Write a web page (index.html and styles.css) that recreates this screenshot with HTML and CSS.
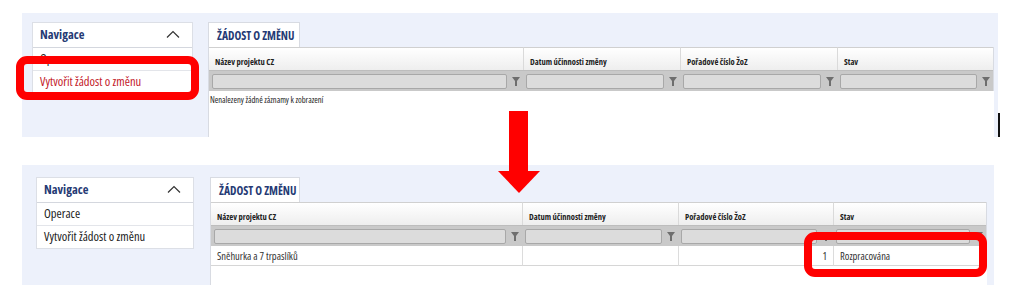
FILE: index.html
```html
<!DOCTYPE html>
<html lang="cs">
<head>
<meta charset="utf-8">
<title>Žádost o změnu</title>
<link rel="stylesheet" href="styles.css">
</head>
<body>
<div class="page">
  <section class="shot shot-top">
    <nav class="nav">
      <div class="nav-head"><span>Navigace</span><svg class="chev" width="14" height="8" viewBox="0 0 14 8"><path d="M1 7.5 L7 1.5 L13 7.5" fill="none" stroke="#333" stroke-width="1.2"/></svg></div>
      <div class="nav-item">Operace</div>
      <div class="nav-item active">Vytvořit žádost o změnu</div>
    </nav>
    <div class="main">
      <div class="tabs"><div class="tab">ŽÁDOST O ZMĚNU</div></div>
      <div class="grid cols-top">
        <div class="th">Název projektu CZ</div>
        <div class="th">Datum účinnosti změny</div>
        <div class="th">Pořadové číslo ŽoZ</div>
        <div class="th">Stav</div>
        <div class="tf"><span class="inp"></span><svg class="fun" width="8" height="9" viewBox="0 0 8 9"><path d="M0 0 H8 L5 4 V9 H3 V4 Z" fill="#6e6e6e"/></svg></div>
        <div class="tf"><span class="inp"></span><svg class="fun" width="8" height="9" viewBox="0 0 8 9"><path d="M0 0 H8 L5 4 V9 H3 V4 Z" fill="#6e6e6e"/></svg></div>
        <div class="tf"><span class="inp"></span><svg class="fun" width="8" height="9" viewBox="0 0 8 9"><path d="M0 0 H8 L5 4 V9 H3 V4 Z" fill="#6e6e6e"/></svg></div>
        <div class="tf"><span class="inp"></span><svg class="fun" width="8" height="9" viewBox="0 0 8 9"><path d="M0 0 H8 L5 4 V9 H3 V4 Z" fill="#6e6e6e"/></svg></div>
      </div>
      <div class="empty">Nenalezeny žádné záznamy k zobrazení</div>
    </div>
    <div class="mark mark-nav"></div>
    <div class="cursor"></div>
  </section>

  <section class="shot shot-bottom">
    <nav class="nav">
      <div class="nav-head"><span>Navigace</span><svg class="chev" width="14" height="8" viewBox="0 0 14 8"><path d="M1 7.5 L7 1.5 L13 7.5" fill="none" stroke="#333" stroke-width="1.2"/></svg></div>
      <div class="nav-item">Operace</div>
      <div class="nav-item">Vytvořit žádost o změnu</div>
    </nav>
    <div class="main">
      <div class="tabs"><div class="tab">ŽÁDOST O ZMĚNU</div></div>
      <div class="grid cols-bottom">
        <div class="th">Název projektu CZ</div>
        <div class="th">Datum účinnosti změny</div>
        <div class="th">Pořadové číslo ŽoZ</div>
        <div class="th">Stav</div>
        <div class="tf"><span class="inp"></span><svg class="fun" width="8" height="9" viewBox="0 0 8 9"><path d="M0 0 H8 L5 4 V9 H3 V4 Z" fill="#6e6e6e"/></svg></div>
        <div class="tf"><span class="inp"></span><svg class="fun" width="8" height="9" viewBox="0 0 8 9"><path d="M0 0 H8 L5 4 V9 H3 V4 Z" fill="#6e6e6e"/></svg></div>
        <div class="tf"><span class="inp"></span><svg class="fun" width="8" height="9" viewBox="0 0 8 9"><path d="M0 0 H8 L5 4 V9 H3 V4 Z" fill="#6e6e6e"/></svg></div>
        <div class="tf"><span class="inp"></span><svg class="fun" width="8" height="9" viewBox="0 0 8 9"><path d="M0 0 H8 L5 4 V9 H3 V4 Z" fill="#6e6e6e"/></svg></div>
        <div class="td">Sněhurka a 7 trpaslíků</div>
        <div class="td"></div>
        <div class="td num">1</div>
        <div class="td">Rozpracována</div>
      </div>
    </div>
    <div class="mark mark-row"></div>
  </section>

  <div class="arrow">
    <div class="shaft"></div>
    <div class="head"></div>
  </div>
</div>
</body>
</html>
```
FILE: styles.css
```css
html, body {
  margin: 0;
  padding: 0;
  background: #ffffff;
}
body {
  width: 1016px;
  height: 285px;
  overflow: hidden;
  font-family: "Open Sans", "Roboto", sans-serif;
  font-stretch: 75%;
  color: #333;
}
.page {
  position: relative;
  width: 1016px;
  height: 285px;
  padding-top: 13px;
  box-sizing: border-box;
}
.shot {
  position: relative;
  display: flex;
  align-items: flex-start;
  background: #edf1fb;
  box-sizing: border-box;
}
.shot-top {
  margin: 0 0 0 22px;
  width: 976px;
  height: 124px;
  padding: 9px 0 0 10px;
  gap: 15px;
}
.shot-bottom {
  margin: 28px 0 0 22px;
  width: 972px;
  height: 120px;
  padding: 12px 0 0 14px;
  gap: 16px;
}
.nav {
  background: #fff;
  border: 1px solid #dcdfe6;
  box-sizing: border-box;
}
.shot-top .nav { width: 161px; }
.shot-bottom .nav { width: 158px; }
.nav-head {
  display: flex;
  align-items: center;
  justify-content: space-between;
  height: 24px;
  padding: 0 12px 2px 7px;
  box-sizing: border-box;
  border-bottom: 1px solid #d4d7de;
  font-weight: bold;
  font-size: 12.5px;
  color: #253a74;
}
.nav-head { height: 25px; }
.nav-item {
  height: 22px;
  line-height: 22px;
  padding: 0 7px;
  font-size: 12.5px;
  color: #222;
  border-bottom: 1px solid #e3e5ea;
  white-space: nowrap;
}
.nav-item:last-child { border-bottom: none; }
.nav-item.active { color: #c3202a; }
.main {
  flex: 1;
  display: flex;
  flex-direction: column;
  align-self: stretch;
}
.shot-top .main { margin-right: 4px; }
.shot-bottom .main { margin-right: 7px; }
.tabs { display: flex; }
.tab {
  height: 25px;
  line-height: 26px;
  padding: 0 8px;
  background: #fff;
  border: 1px solid #d8dbe2;
  border-bottom: none;
  font-weight: bold;
  font-size: 11.5px;
  color: #253a74;
  box-sizing: border-box;
  white-space: nowrap;
}
.shot-top .tab { width: 92px; }
.shot-bottom .tab { width: 90px; }
.grid {
  display: grid;
  background: #fff;
  border-left: 1px solid #d8dbe2;
  border-right: 1px solid #d8dbe2;
}
.cols-top { grid-template-columns: 314px 157px 157px 1fr; }
.cols-bottom { grid-template-columns: 311px 156px 155px 1fr; }
.th {
  height: 22px;
  line-height: 27px;
  padding: 0 6px;
  font-weight: bold;
  font-size: 8.5px;
  color: #222;
  background: linear-gradient(#ffffff, #eeeeee);
  border-left: 1px solid #dadada;
  border-top: 1px solid #d0d0d0;
  white-space: nowrap;
}
.th:first-child, .tf:nth-child(5), .td:nth-child(9) { border-left: none; }
.tf {
  display: flex;
  align-items: center;
  gap: 5px;
  height: 20px;
  padding: 0 3px 0 3px;
  background: #c9c9c9;
  border-top: 1px solid #bdbdbd;
}
.inp {
  flex: 1;
  height: 13px;
  background: #dcdcdc;
  border: 1px solid #a8a8a8;
  border-radius: 2px;
}
.fun { flex: none; }
.empty {
  flex: 1;
  background: #fff;
  border-left: 1px solid #d8dbe2;
  font-size: 8.5px;
  padding: 3px 1px;
  color: #222;
}
.td {
  height: 19px;
  line-height: 20px;
  padding: 0 6px;
  font-size: 10.5px;
  color: #333;
  border-left: 1px solid #dcdcdc;
  border-bottom: 1px solid #d6d6d6;
  white-space: nowrap;
}
.td.num { text-align: right; }
.shot-bottom .main::after {
  content: "";
  flex: 1;
  background: #fff;
  border-left: 1px solid #d8dbe2;
}
.mark {
  position: absolute;
  border: 8px solid #ff0000;
  border-radius: 11px;
}
.mark-nav {
  left: -6px;
  top: 43px;
  width: 167px;
  height: 28px;
}
.mark-row {
  left: 782px;
  top: 67px;
  width: 167px;
  height: 29px;
}
.cursor {
  position: absolute;
  left: 976px;
  top: 100px;
  width: 2px;
  height: 24px;
  background: #111;
}
.arrow {
  position: absolute;
  left: 498px;
  top: 111px;
  width: 41px;
  display: flex;
  flex-direction: column;
  align-items: center;
}
.shaft {
  width: 19px;
  height: 60px;
  background: #ff0000;
}
.head {
  width: 0;
  height: 0;
  border-left: 21px solid transparent;
  border-right: 21px solid transparent;
  border-top: 22px solid #ff0000;
}
```
